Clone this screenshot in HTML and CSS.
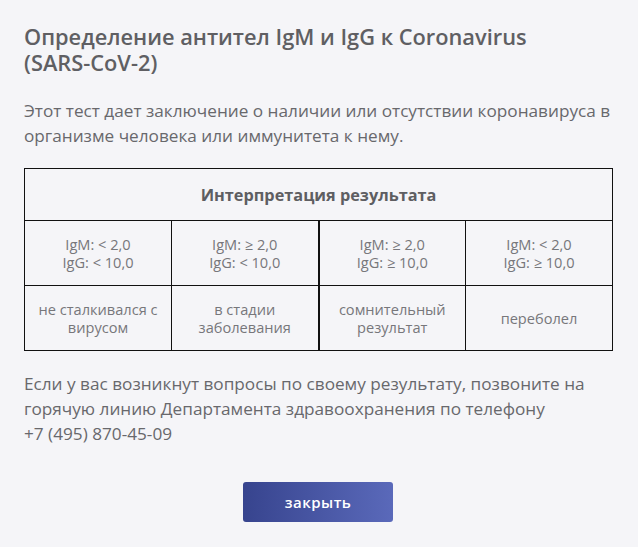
FILE: index.html
```html
<!DOCTYPE html>
<html lang="ru">
<head>
<meta charset="utf-8">
<link rel="stylesheet" href="styles.css">
</head>
<body>
<div class="modal">
  <h1 class="title">Определение антител IgM и IgG к Coronavirus (SARS-CoV-2)</h1>
  <p class="text">Этот тест дает заключение о наличии или отсутствии коронавируса в организме человека или иммунитета к нему.</p>
  <table class="result">
    <tr><th colspan="4">Интерпретация результата</th></tr>
    <tr class="vals">
      <td><div class="ln">IgM: &lt; 2,0</div><div class="ln">IgG: &lt; 10,0</div></td>
      <td class="split"><div class="ln">IgM: ≥ 2,0</div><div class="ln">IgG: &lt; 10,0</div></td>
      <td><div class="ln">IgM: ≥ 2,0</div><div class="ln">IgG: ≥ 10,0</div></td>
      <td><div class="ln">IgM: &lt; 2,0</div><div class="ln">IgG: ≥ 10,0</div></td>
    </tr>
    <tr class="vals">
      <td>не сталкивался с вирусом</td>
      <td class="split">в стадии заболевания</td>
      <td>сомнительный результат</td>
      <td>переболел</td>
    </tr>
  </table>
  <p class="text note">Если у вас возникнут вопросы по своему результату, позвоните на горячую линию Департамента здравоохранения по телефону +7&nbsp;(495)&nbsp;870-45-09</p>
  <div class="actions"><button class="close">закрыть</button></div>
</div>
</body>
</html>
```
FILE: styles.css
```css
html, body {
  margin: 0;
  background: #f5f5f8;
}
.modal {
  padding: 24px 25px 0 24px;
  font-family: "Open Sans", sans-serif;
  color: #666;
}
.title {
  margin: 0;
  font-size: 21.8px;
  line-height: 26px;
  font-weight: 600;
  color: #5f5f63;
  width: 560px;
}
.text {
  margin: 22px 0 0;
  font-size: 17.2px;
  line-height: 25px;
  color: #68686c;
}
.result {
  margin-top: 20px;
  width: 589px;
  border-collapse: collapse;
  table-layout: fixed;
  border: 1px solid #111;
}
.result th {
  height: 51px;
  font-size: 16.3px;
  font-weight: 700;
  color: #5e5e62;
  border-bottom: 1px solid #111;
  padding: 0;
}
.result td {
  height: 64px;
  border: 1px solid #111;
  text-align: center;
  vertical-align: middle;
  font-size: 14.6px;
  line-height: 18px;
  color: #77777b;
  padding: 0 4px;
}
.result .ln {
  height: 18px;
  overflow: visible;
}
.result td.split {
  border-right-width: 2px;
}
.note {
  margin-top: 20px;
}
.actions {
  display: flex;
  justify-content: center;
  margin-top: 36px;
  padding-right: 1px;
}
.close {
  width: 150px;
  height: 40px;
  border: 0;
  border-radius: 3px;
  background: linear-gradient(90deg, #37448e, #5a69ba);
  color: #fff;
  font-family: "Open Sans", sans-serif;
  font-size: 15px;
  font-weight: 600;
  letter-spacing: 0.5px;
}
```
